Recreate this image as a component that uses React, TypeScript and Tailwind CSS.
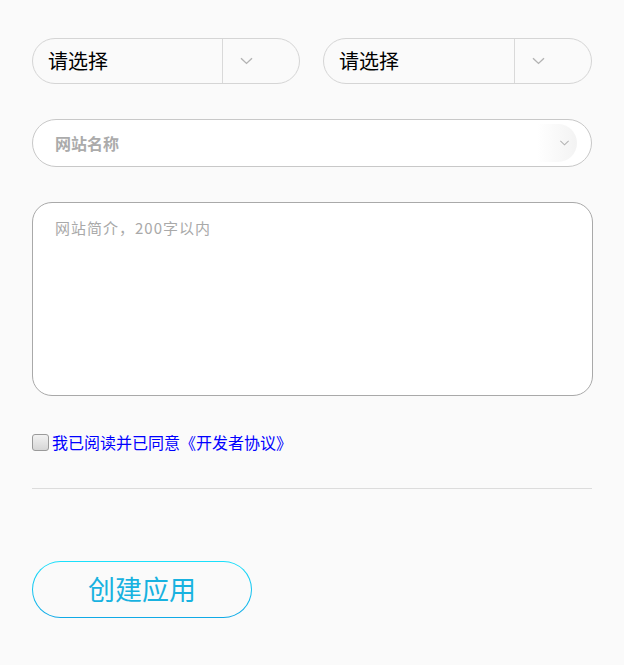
import React from "react";

const Chevron = ({ className = "" }: { className?: string }) => (
  <svg width="13" height="8" viewBox="0 0 13 8" className={className} fill="none">
    <path d="M1 1.2 L6.5 6.4 L12 1.2" stroke="#b3b3b3" strokeWidth="1.4" />
  </svg>
);

const SelectBox = ({ w }: { w: string }) => (
  <div className={`flex h-[46px] ${w} items-stretch rounded-full border border-[#d5d5d5] bg-[#fafafa]`}>
    <div className="flex flex-1 items-center pl-[15px] text-[20px] text-black">请选择</div>
    <div className="w-px bg-[#d9d9d9]" />
    <div className="flex w-[76px] items-center pl-[17px]">
      <Chevron />
    </div>
  </div>
);

export default function App() {
  return (
    <div
      className="min-h-[665px] w-[624px] bg-[#fafafa] px-[32px] pt-[38px]"
      style={{ fontFamily: '"Microsoft YaHei", "Noto Sans CJK SC", sans-serif' }}
    >
      <div className="flex w-[560px] justify-between">
        <SelectBox w="w-[268px]" />
        <SelectBox w="w-[269px]" />
      </div>

      <div className="relative mt-[35px] flex h-[48px] w-[560px] items-center rounded-full border border-[#c8c8c8] bg-white pl-[22px]">
        <span className="text-[16px] font-bold text-[#ababab]">网站名称</span>
        <div className="absolute right-[14px] top-[4px] flex h-[38px] w-[40px] items-center justify-end rounded-r-full bg-gradient-to-r from-white to-[#f3f3f3] pr-[6px]">
          <Chevron className="scale-75" />
        </div>
      </div>

      <div className="mt-[35px] h-[194px] w-[561px] rounded-[20px] border border-[#a9a9a9] bg-white pl-[22px] pt-[12px]">
        <span className="text-[15px] tracking-[1px] text-[#a9a9a9]">网站简介，200字以内</span>
      </div>

      <div className="mt-[34px] flex items-center">
        <div className="h-[17px] w-[17px] rounded-[3px] border border-[#9a9a9a] bg-gradient-to-b from-[#f2f2f2] to-[#d6d6d6]" />
        <span className="ml-[3px] text-[16px] text-[#0000ff]">我已阅读并已同意《开发者协议》</span>
      </div>

      <div className="mt-[34px] h-px w-[560px] bg-[#dcdcdc]" />

      <div className="mt-[72px] h-[57px] w-[220px] rounded-full bg-gradient-to-b from-[#1be0fb] to-[#10a9e6] p-px">
        <div className="flex h-full w-full items-center justify-center rounded-full bg-[#fafafa] text-[27px] text-[#18b2e0]">
          创建应用
        </div>
      </div>
    </div>
  );
}
